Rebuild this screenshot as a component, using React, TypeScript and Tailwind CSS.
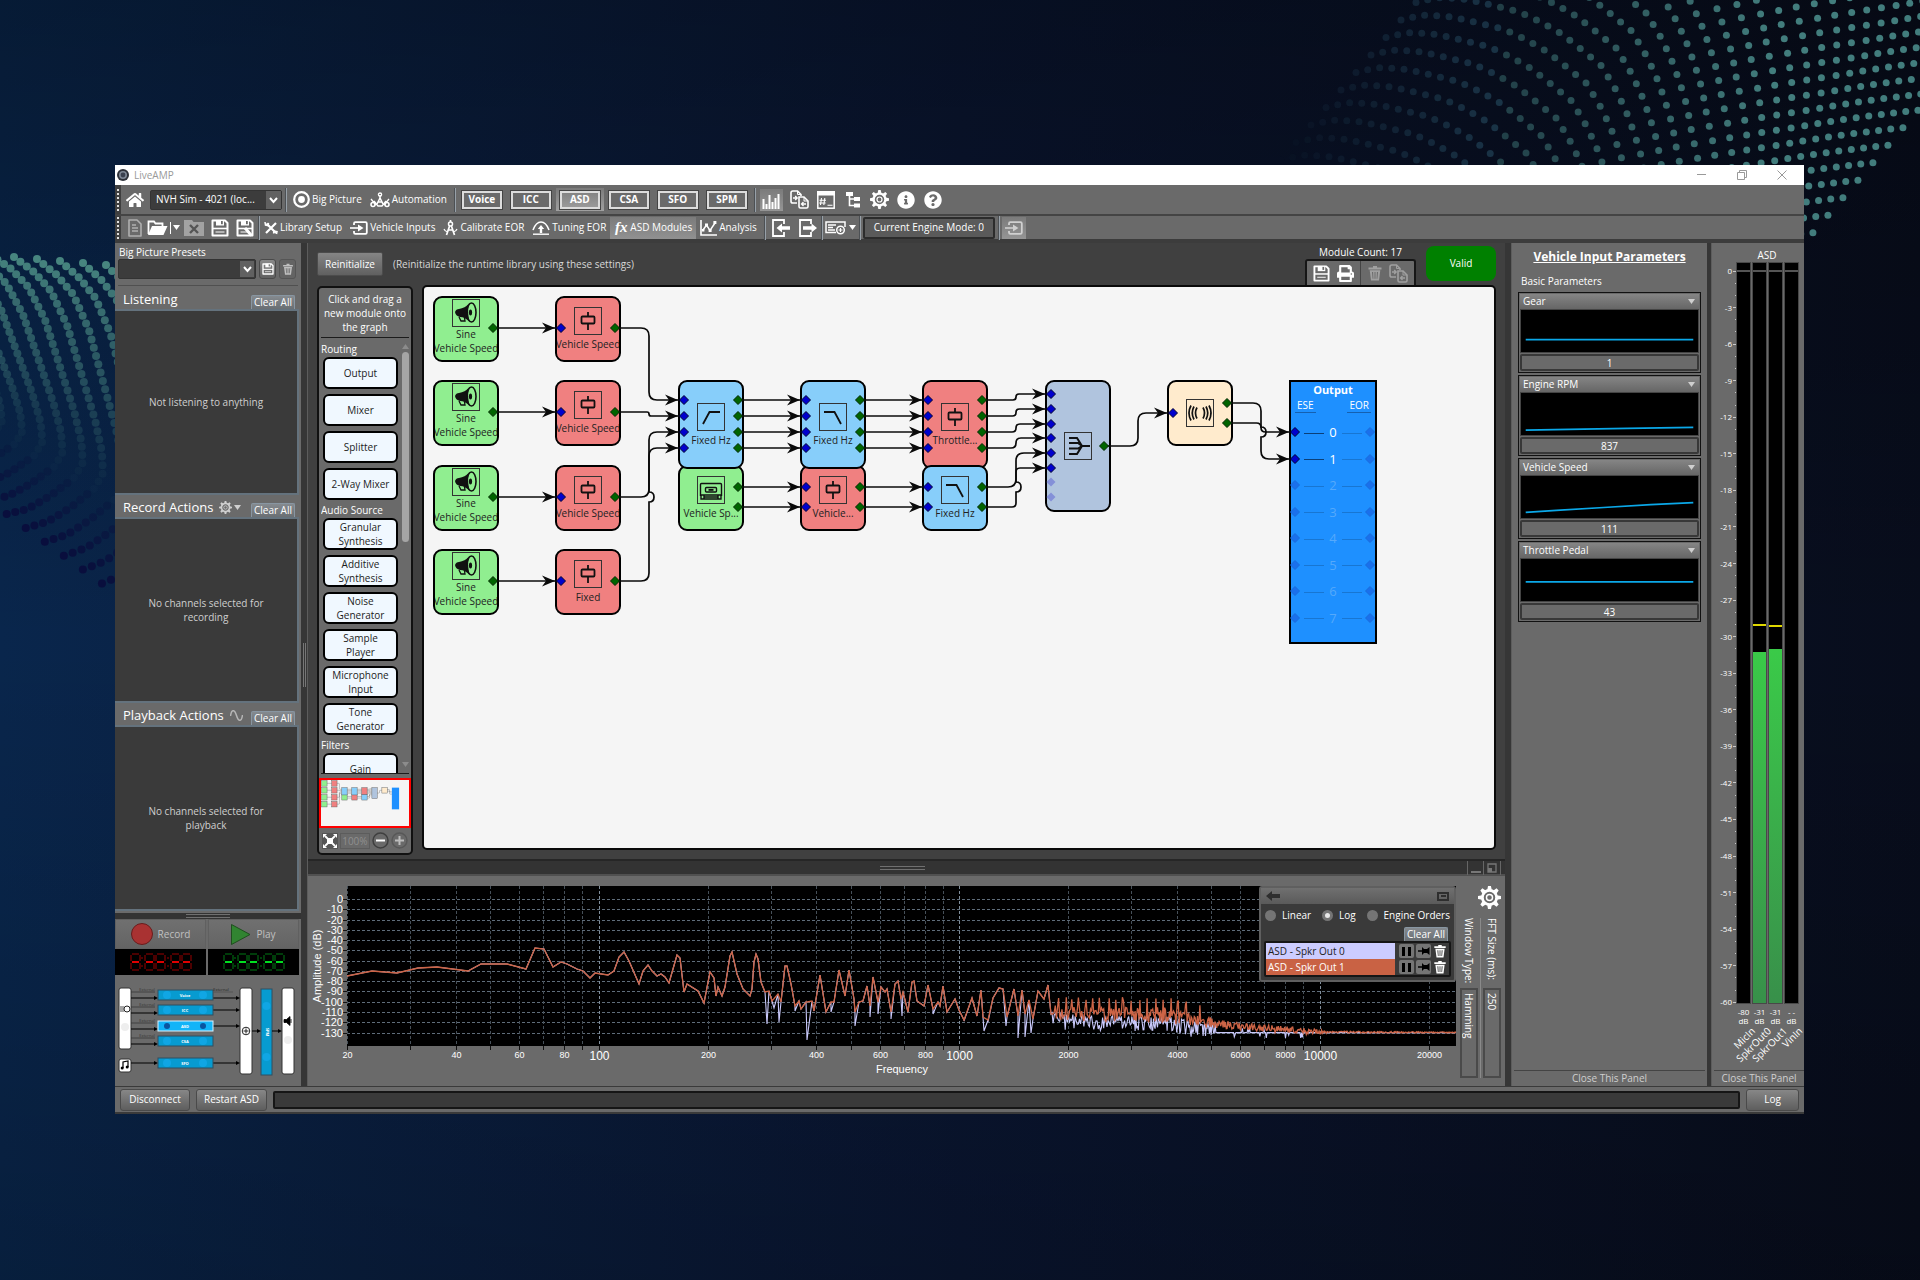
import { ReactNode } from "react";
import { FaHome, FaInfoCircle, FaQuestionCircle, FaPrint } from "react-icons/fa";
import { clsx } from "clsx";

type Pt = [number, number];

/* ---------- backdrop ---------- */

const LEFT_CHAIN: Pt[] = [
  [14, 57], [34, 72], [51, 91], [67, 125], [80, 169], [95, 220], [102, 252],
  [103, 273], [95, 288], [70, 308], [47, 322], [22, 329],
];

const RIGHT_CHAIN: Pt[] = [
  [61, 90], [74, 87], [87, 85], [113, 87], [138, 93], [163, 99], [185, 109], [206, 121], [224, 135], [246, 153],
  [259, 174], [270, 196], [279, 220], [287, 246], [292, 274], [298, 300], [302, 330],
  [301, 378], [297, 410], [292, 445], [286, 484], [278, 530], [268, 580],
];

// walk a polyline and drop a dot every so often
function walk(points: Pt[], stepStart: number, stepEnd: number) {
  const lengths: number[] = [];
  let total = 0;
  for (let i = 1; i < points.length; i++) {
    const d = Math.hypot(points[i][0] - points[i - 1][0], points[i][1] - points[i - 1][1]);
    lengths.push(d);
    total += d;
  }
  const out: { x: number; y: number; t: number }[] = [];
  let s = 0;
  while (s < total) {
    let rest = s;
    let i = 0;
    while (i < lengths.length - 1 && rest > lengths[i]) {
      rest -= lengths[i];
      i++;
    }
    const k = rest / lengths[i];
    out.push({
      x: points[i][0] + (points[i + 1][0] - points[i][0]) * k,
      y: points[i][1] + (points[i + 1][1] - points[i][1]) * k,
      t: s / total,
    });
    s += stepStart + (stepEnd - stepStart) * (s / total);
  }
  return out;
}

function LeftDots() {
  const dots: ReactNode[] = [];
  for (let i = -5; i < 6; i++) {
    walk(LEFT_CHAIN, 8, 9).forEach((d, j) => {
      const x = d.x + i * (23 - 4 * d.t);
      const y = d.y + i * (2 + 12 * d.t);
      if (x < -4 || x > 120) return;
      const dark = d.t > 0.78;
      const opacity = dark ? (d.t - 0.72) * 3.4 : Math.max(0.04, 1 - d.t * 1.3);
      dots.push(<circle key={i + "-" + j} cx={x} cy={y} r={4} fill={dark ? "#0a0c3c" : "#47857f"} opacity={opacity} />);
    });
  }
  return <svg className="absolute left-0 top-[200px] h-[420px] w-[120px]" aria-hidden="true">{dots}</svg>;
}

function RightDots() {
  const dots: ReactNode[] = [];
  for (let n = -6; n < 34; n++) {
    walk(RIGHT_CHAIN, 12, 17).forEach((d, j) => {
      const x = d.x + n * 15;
      const y = d.y - n * 17.5;
      if (y < -4 || y > 260 || x > 645) return;
      // the field is cut off along a slanted edge
      if (x > 622 - (y - 139) * 0.84) return;
      const opacity = Math.min(1, Math.max(0, (x + 5) / 500));
      if (opacity === 0) return;
      dots.push(<circle key={n + "-" + j} cx={x} cy={y} r={3.5} fill={x < 220 ? "#32647c" : "#427d7d"} opacity={opacity} />);
    });
  }
  return <svg className="absolute right-0 top-0 h-[260px] w-[640px]" aria-hidden="true">{dots}</svg>;
}

/* ---------- icons ---------- */

function Svg({ size = 20, w, className, children }: { size?: number; w?: number; className?: string; children: ReactNode }) {
  const width = w ?? size;
  return (
    <svg width={width} height={size} viewBox={`0 0 ${width} ${size}`} fill="none" stroke="currentColor" strokeWidth={2} className={clsx("shrink-0", className)} aria-hidden="true">
      {children}
    </svg>
  );
}

function GearIcon({ size = 18 }: { size?: number }) {
  return (
    <svg width={size} height={size} viewBox="-11 -11 22 22" fill="none" stroke="currentColor" className="shrink-0" aria-hidden="true">
      <circle r="6.8" strokeWidth="2.6" />
      <circle r="2.9" strokeWidth="1.4" />
      {[0, 45, 90, 135, 180, 225, 270, 315].map((a) => (
        <path key={a} d="M-2.2 -7 L-1.4 -11 H1.4 L2.2 -7 Z" fill="currentColor" stroke="none" transform={`rotate(${a})`} />
      ))}
    </svg>
  );
}

function SaveIcon({ size = 18, edit }: { size?: number; edit?: boolean }) {
  return (
    <svg width={size} height={size} viewBox="0 0 18 18" fill="none" stroke="currentColor" className="shrink-0" aria-hidden="true">
      <path d="M1.5 1.5 H14 L16.5 4 V16.5 H1.5 Z" strokeWidth="2" strokeLinejoin="round" />
      <path d="M5 1 V6.5 H13 V1 Z" fill="currentColor" stroke="none" />
      <rect x="10" y="2" width="1.8" height="3.2" fill="#6a6a6a" stroke="none" />
      <path d="M1.5 9.5 H16.5" strokeWidth="1.6" />
      <path d="M4.5 13 H13.5" strokeWidth="1" />
      {edit && <path d="M9 9 L15.5 16.5" strokeWidth="3" />}
    </svg>
  );
}

function TrashIcon({ size = 16 }: { size?: number }) {
  return (
    <svg width={size} height={size} viewBox="0 0 16 16" fill="currentColor" className="shrink-0" aria-hidden="true">
      <path d="M1.5 2.5 H6 V1 H10 V2.5 H14.5 V4.5 H1.5 Z" />
      <path fillRule="evenodd" d="M2.7 5.3 H13.3 L12 15.5 H4 Z M5 7 L5.6 13.8 H6.4 L6.1 7 Z M7.5 7 V13.8 H8.5 V7 Z M9.9 7 L9.6 13.8 H10.4 L11 7 Z" />
    </svg>
  );
}

function PlugIcon() {
  return (
    <Svg size={14} w={18}>
      <path d="M4 4 V2.5 Q4 1.2 5.3 1.2 H15.5 Q16.8 1.2 16.8 2.5 V11.5 Q16.8 12.8 15.5 12.8 H5.3 Q4 12.8 4 11.5 V10" strokeWidth="1.8" />
      <path d="M0 7 H9" strokeWidth="1.6" />
      <path d="M8 3.6 L13.5 7 L8 10.4 Z" fill="currentColor" stroke="none" />
    </Svg>
  );
}

function CopyDocs() {
  return (
    <Svg size={19} w={19}>
      <path d="M7 13 H2.8 Q1 13 1 11.2 V2.8 Q1 1 2.8 1 H7.5 L11 4.5 V6" strokeWidth="1.6" />
      <path d="M9 7 H14 L18 11 V16.5 Q18 18 16.5 18 H10.5 Q9 18 9 16.5 Z" strokeWidth="1.6" />
      <path d="M7.500 1 V4.500 H11 M14 7 V11 H18" strokeWidth="1" />
      <path d="M3 8 H7 M5.200 6 L7.200 8 L5.200 10 M11.500 14 H16 M13.500 12 L11.500 14 L13.500 16" strokeWidth="1.3" />
    </Svg>
  );
}

function Caret() {
  return (
    <svg width="7" height="5" viewBox="0 0 7 5" fill="currentColor" aria-hidden="true" className="shrink-0">
      <path d="M0 0 H7 L3.5 5 Z" />
    </svg>
  );
}

function Chevron() {
  return (
    <Svg size={8} w={9}>
      <path d="M1 2 L4.5 6 L8 2" strokeWidth="2" />
    </Svg>
  );
}

/* ---------- toolbars ---------- */

function Grip() {
  return (
    <div className="flex w-[6px] shrink-0 flex-col items-center justify-center gap-[2px] self-stretch bg-[#3f3f3f]">
      {[0, 1, 2, 3, 4, 5].map((i) => (
        <span key={i} className="h-[2px] w-[2px] bg-[#e0e0e0]" />
      ))}
    </div>
  );
}

function Sep() {
  return <span className="ml-[3px] mr-[2px] h-6 w-[2px] shrink-0 border-l border-[#4c5054] bg-[#97a0a8]" />;
}

function ToolButton({ icon, label, active }: { icon: ReactNode; label: string; active?: boolean }) {
  return (
    <button
      className={clsx(
        "flex h-[22px] shrink-0 items-center gap-[2px] whitespace-nowrap px-[4px] text-[10px] font-medium",
        active && "bg-linear-to-b from-[#7b7b7b] to-[#919191]"
      )}
    >
      {icon}
      {label}
    </button>
  );
}

function IconButton({ label, children, active, className }: { label: string; children: ReactNode; active?: boolean; className?: string }) {
  return (
    <button
      aria-label={label}
      className={clsx("flex h-[22px] shrink-0 items-center justify-center", active && "bg-linear-to-b from-[#7b7b7b] to-[#959595]", className ?? "w-[27px]")}
    >
      {children}
    </button>
  );
}

const MODES = ["Voice", "ICC", "ASD", "CSA", "SFO", "SPM"];

function TopToolbar() {
  return (
    <div className="flex h-[31px] shrink-0 items-center border-b-2 border-[#444] bg-[#6a6a6a]">
      <Grip />
      <IconButton label="Home" className="ml-[2px] w-[24px]">
        <FaHome size={18} />
      </IconButton>
      <div className="relative ml-[3px] flex h-[20px] w-[132px] shrink-0 items-center rounded-[2px] border border-[#333] bg-[#3c3c3c]">
        <select aria-label="Project" className="w-full appearance-none truncate bg-transparent pl-[5px] pr-[20px] text-[10px] text-white">
          <option>NVH Sim - 4021 (loc...</option>
        </select>
        <span className="pointer-events-none absolute right-0 top-0 flex h-[18px] w-[15px] items-center justify-center bg-[#616161]">
          <Chevron />
        </span>
      </div>
      <Sep />
      <ToolButton
        icon={
          <Svg size={17}>
            <circle cx="8.5" cy="8.5" r="7.3" strokeWidth="2.2" />
            <circle cx="8.5" cy="8.5" r="3.4" fill="currentColor" stroke="none" />
          </Svg>
        }
        label="Big Picture"
      />
      <ToolButton
        icon={
          <Svg size={16} w={20}>
            <path d="M10 6 V3 M10 6 L7 12 M10 6 L13 12 M8.4 10 H11.6" strokeWidth="1.6" />
            <circle cx="10" cy="2.6" r="1.6" strokeWidth="1.3" />
            <circle cx="3" cy="12.5" r="2" strokeWidth="1.6" />
            <circle cx="17" cy="12.5" r="2" strokeWidth="1.6" />
            <path d="M1 7 L6 13 M19 7 L14 13 M4 9 L8 14 H12 L16 9" strokeWidth="1.3" />
          </Svg>
        }
        label="Automation"
      />
      <Sep />
      <div className="flex gap-px">
        {MODES.map((m) => (
          <button
            key={m}
            className={clsx("flex h-[23px] w-[48px] items-center justify-center", m === "ASD" && "bg-linear-to-b from-[#7b7b7b] to-[#a0a0a0]")}
          >
            <span className="flex h-[18px] w-[40px] items-center justify-center border-2 border-[#dcdcdc] text-[10px] font-bold outline outline-[#444]">{m}</span>
          </button>
        ))}
      </div>
      <Sep />
      <IconButton label="Meters" active className="ml-[2px] mr-[3px] w-[23px]">
        <Svg size={18} w={18}>
          <path d="M1.5 18 V8 M4.5 18 V13 M7.5 18 V4 M10.5 18 V11 M13.5 18 V7 M16.5 18 V3" strokeWidth="2" />
        </Svg>
      </IconButton>
      <IconButton label="Copy">
        <CopyDocs />
      </IconButton>
      <IconButton label="Console">
        <Svg size={18} w={18}>
          <rect x="0.8" y="0.8" width="16.4" height="16.4" strokeWidth="1.5" />
          <rect x="0" y="0" width="18" height="4.5" fill="currentColor" stroke="none" />
          <path d="M4.5 7 L3.5 14 M7.8 7 L6.8 14 M2.5 9.2 H9 M2.2 12 H8.6 M10.5 14.3 H15.5" strokeWidth="1.1" />
        </Svg>
      </IconButton>
      <IconButton label="Tree" className="w-[26px]">
        <Svg size={18} w={16}>
          <path d="M4.5 3 V14.5 H10 M4.5 8 H10" strokeWidth="1.6" />
          <path d="M1 1 H8 V5 H1 Z M9 6 H15 V10 H9 Z M9 12.5 H15 V16.5 H9 Z" fill="currentColor" stroke="none" />
        </Svg>
      </IconButton>
      <IconButton label="Settings">
        <GearIcon size={19} />
      </IconButton>
      <IconButton label="Info">
        <FaInfoCircle size={18} />
      </IconButton>
      <IconButton label="Help">
        <FaQuestionCircle size={18} />
      </IconButton>
    </div>
  );
}

function SecondToolbar() {
  return (
    <div className="flex h-[27px] shrink-0 items-center border-b-4 border-[#3c3c3c] bg-[#6a6a6a]">
      <Grip />
      <IconButton label="New" className="ml-[4px] w-[20px] text-[#b0b0b0]">
        <Svg size={18} w={14}>
          <path d="M1 1 H9 L13 5 V17 H1 Z" strokeWidth="1.6" strokeLinejoin="round" />
          <path d="M4 6 H8 M4 9 H10 M4 12 H10" strokeWidth="1.3" />
        </Svg>
      </IconButton>
      <IconButton label="Open" className="w-[36px] gap-[2px]">
        <Svg size={17} w={21}>
          <path d="M1.5 15 V2.5 H7 L8.5 4.5 H15.5 V7" strokeWidth="1.8" />
          <path d="M1 16 L5 7 H20.5 L16.5 16 Z" fill="currentColor" stroke="none" />
        </Svg>
        <span className="h-[12px] w-px bg-white" />
        <Caret />
      </IconButton>
      <IconButton label="Close" className="w-[26px] text-[#a2a2a2]">
        <Svg size={17} w={20}>
          <path d="M0 1 H8 L9.5 3 H20 V17 H0 Z" fill="currentColor" stroke="none" />
          <path d="M6 6 L14 14 M14 6 L6 14" stroke="#555" strokeWidth="2.4" />
        </Svg>
      </IconButton>
      <IconButton label="Save" className="w-[25px]">
        <SaveIcon />
      </IconButton>
      <IconButton label="Save as" className="w-[25px]">
        <SaveIcon edit />
      </IconButton>
      <span className="ml-[1px] h-6 w-[2px] shrink-0 border-l border-[#4c5054] bg-[#97a0a8]" />
      <ToolButton
        icon={
          <Svg size={14}>
            <path d="M2 12 L12 2 M2.500 2.500 L12 12" strokeWidth="2.200" />
            <path d="M1 1 L1.500 4 L4 4.500 L4.500 1.800 M9.500 12.500 L10 10 L13 10.500 L12.500 13" strokeWidth="1.500" />
          </Svg>
        }
        label="Library Setup"
      />
      <ToolButton icon={<PlugIcon />} label="Vehicle Inputs" />
      <ToolButton
        icon={
          <Svg size={16} w={15}>
            <circle cx="7.5" cy="4" r="2" strokeWidth="1.5" />
            <path d="M7.5 2 V0 M6.6 6 L3.5 15 M8.4 6 L11.5 15 M5 10 H10" strokeWidth="1.7" />
            <path d="M1 9 Q2 11.5 4.5 11.8 M14 9 Q13 11.5 10.5 11.8" strokeWidth="1.2" />
          </Svg>
        }
        label="Calibrate EOR"
      />
      <ToolButton
        icon={
          <Svg size={16} w={18}>
            <path d="M1 10 Q4 2 9 2 Q14 2 17 10" strokeWidth="1.6" />
            <path d="M9 5 L5.8 9 H7.8 V13 H10.2 V9 H12.2 Z" fill="currentColor" stroke="none" />
            <path d="M1 14.2 H17" strokeWidth="1.4" />
          </Svg>
        }
        label="Tuning EOR"
      />
      <ToolButton active icon={<span className="w-[14px] text-center font-['Liberation_Serif',serif] text-[15px] font-bold italic leading-none">fx</span>} label="ASD Modules" />
      <ToolButton
        icon={
          <Svg size={16} w={17}>
            <path d="M1 0 V15 H17" strokeWidth="1.6" />
            <path d="M3 10 L6.5 5 L10 10.5 L15 3" strokeWidth="1.5" />
            <path d="M5 3.6 h3 v3 h-3 Z M8.6 9 h3 v3 h-3 Z M13.4 1 h3 v3 h-3 Z M2 9 h2.4 v2.4 h-2.4 Z" fill="currentColor" stroke="none" />
          </Svg>
        }
        label="Analysis"
      />
      <Sep />
      <IconButton label="Import" className="ml-[3px] w-[20px]">
        <Svg size={18} w={18}>
          <path d="M12 5 V1 H1 V17 H12 V13" strokeWidth="1.8" />
          <path d="M4.5 9 L10 4.5 V7.3 H18 V10.7 H10 V13.5 Z" fill="currentColor" stroke="none" />
        </Svg>
      </IconButton>
      <IconButton label="Export" className="ml-[7px] w-[20px]">
        <Svg size={18} w={18}>
          <path d="M12 5 V1 H1 V17 H12 V13" strokeWidth="1.8" />
          <path d="M18 9 L12.5 4.5 V7.3 H4 V10.7 H12.5 V13.5 Z" fill="currentColor" stroke="none" />
        </Svg>
      </IconButton>
      <Sep />
      <IconButton label="Add preset" className="w-[31px] gap-[3px]">
        <Svg size={14} w={21}>
          <path d="M20 6 V1 H1 V11.5 H11" strokeWidth="1.5" />
          <path d="M3 4 H11 M3 6.5 H8 M3 9 H10" strokeWidth="1.4" />
          <circle cx="15.5" cy="9" r="3.8" strokeWidth="1.5" />
          <path d="M15.5 7 V11 M13.5 9 H17.5" strokeWidth="1.2" />
        </Svg>
        <Caret />
      </IconButton>
      <Sep />
      <span className="flex h-[22px] shrink-0 items-center whitespace-nowrap rounded-[2px] border-2 border-[#2c2c2c] bg-[#5a5a5a] px-[9px] text-[10px]">Current Engine Mode: 0</span>
      <Sep />
      <IconButton label="Engine input" active className="w-[24px] text-[#d0d0d0]">
        <PlugIcon />
      </IconButton>
    </div>
  );
}

/* ---------- left column ---------- */

function ClearAll() {
  return (
    <button className="h-[14px] whitespace-nowrap rounded-t-[2px] border border-b-0 border-[#8896a2] bg-linear-to-b from-[#858a8f] to-[#6a6f73] px-[2px] text-[10px] leading-[13px]">
      Clear All
    </button>
  );
}

function ActionSection({ title, icon, children }: { title: string; icon?: ReactNode; children: ReactNode }) {
  return (
    <section className="flex min-h-0 flex-1 flex-col pr-[2px]">
      <div className="flex h-[22px] shrink-0 items-end pl-[8px] pr-[4px]">
        <h2 className="flex flex-1 items-center gap-[6px] text-[13px] leading-[20px]">
          {title}
          {icon}
        </h2>
        <ClearAll />
      </div>
      <div className="flex flex-1 items-center justify-center border-2 border-l-0 border-[#64727d] bg-[#3a3a3a] px-6 text-center text-[10px] leading-[14px] text-[#cfcfcf]">
        {children}
      </div>
    </section>
  );
}

function Lcd({ lit, ghost }: { lit: string; ghost: string }) {
  return (
    <div className="flex h-[26px] flex-1 items-center bg-black">
      <svg width="91" height="26" aria-hidden="true">
        {[16, 30, 41, 56, 67].map((x) => (
          <g key={x} fill="none" strokeWidth="2">
            <path d={`M${x + 1} 5 H${x + 8} M${x} 6 V12 M${x + 9} 6 V12 M${x} 14 V20 M${x + 9} 14 V20 M${x + 1} 21 H${x + 8}`} stroke={ghost} />
            <path d={`M${x + 1} 13 H${x + 8}`} stroke={lit} />
          </g>
        ))}
        {[27, 53].map((x) => (
          <path key={x} d={`M${x} 8 v2 M${x} 16 v2`} stroke={ghost} strokeWidth="2" />
        ))}
      </svg>
    </div>
  );
}

const ROUTES = [
  { name: "Voice", y: 15 },
  { name: "ICC", y: 30 },
  { name: "ASD", y: 46 },
  { name: "CSA", y: 61 },
  { name: "SFO", y: 83 },
];

function RoutingOverview() {
  return (
    <svg className="w-full" height="111" viewBox="0 0 186 111" preserveAspectRatio="xMinYMin meet" fontFamily="Open Sans, sans-serif">
      <g fill="#fff" stroke="#333" strokeWidth="1">
        <rect x="4" y="13" width="12" height="61" rx="2" />
        <rect x="4" y="84" width="12" height="13" rx="2" />
        <rect x="125" y="13" width="12" height="86" rx="2" />
        <rect x="167" y="13" width="12" height="86" rx="2" />
      </g>
      <rect x="146" y="14" width="11" height="86" fill="#079bd0" stroke="#2e4f60" />
      <g fill="#10a6e4">
        <circle cx="151.500" cy="31" r="4" />
        <circle cx="151.500" cy="82" r="4" />
      </g>
      <text x="151" y="57" fontSize="4" fontWeight="bold" fill="#fff" textAnchor="middle" transform="rotate(90 151 57)">SPM</text>
      {ROUTES.map((r) => {
        const on = r.name === "ASD";
        return (
          <g key={r.name}>
            {r.name !== "SFO" && (
              <g stroke="#333" strokeWidth="1" opacity="0.75">
                <path d={`M16 ${r.y + 2} H40`} />
                <text x="32" y={r.y + 1} fontSize="4" fill="#222" stroke="none" textAnchor="middle">External</text>
              </g>
            )}
            <path d={`M16 ${r.y + (r.name === "SFO" ? 5 : 8)} H41`} stroke="#000" />
            <path d={`M39 ${r.y + (r.name === "SFO" ? 3 : 6)} l4 2 l-4 2 Z`} />
            {r.name !== "CSA" && (
              <>
                <path d={`M98 ${r.y + (r.name === "Voice" ? 8 : 5)} H123`} stroke="#000" />
                <path d={`M121 ${r.y + (r.name === "Voice" ? 6 : 3)} l4 2 l-4 2 Z`} />
              </>
            )}
            <rect x="43" y={r.y} width="55" height="10" fill={on ? "#12b4f8" : "#079bd0"} stroke={on ? "#d8f2ff" : "#2e4f60"} />
            <circle cx="52" cy={r.y + 5} r={on ? 3 : 4} fill={on ? "#0a55a0" : "#10a6e4"} />
            <circle cx="88" cy={r.y + 5} r={on ? 3 : 4} fill={on ? "#0a55a0" : "#10a6e4"} />
            <text x="70" y={r.y + 7} fontSize="4" fontWeight="bold" fill="#fff" textAnchor="middle">{r.name}</text>
          </g>
        );
      })}
      <path d="M98 17 H118" stroke="#555" />
      <text x="106" y="16" fontSize="4" fill="#222" textAnchor="middle">External</text>
      <path d="M137 56 H144 M157 56 H165" stroke="#000" />
      <path d="M142 54 l4 2 l-4 2 Z M163 54 l4 2 l-4 2 Z" />
      <circle cx="131" cy="56" r="3.800" fill="none" stroke="#222" />
      <path d="M131 53.500 v5 M128.500 56 h5" stroke="#222" />
      <circle cx="12" cy="34" r="3" fill="none" stroke="#222" />
      <path d="M6 31 v6 M8 31 v6" stroke="#222" strokeWidth="0.800" />
      <circle cx="10" cy="52" r="4" fill="#eee" />
      <circle cx="173" cy="65" r="4" fill="#eee" />
      <path d="M169 44.500 h2.500 l3.500 -3 v9 l-3.500 -3 h-2.500 Z M176 44 v4" stroke="#000" strokeWidth="0.800" />
      <path d="M8 93 V87 L13 86 V92" fill="none" stroke="#000" strokeWidth="1.200" />
      <circle cx="7.200" cy="93" r="1.500" />
      <circle cx="12.200" cy="92" r="1.500" />
    </svg>
  );
}

function LeftPanel() {
  return (
    <aside className="flex w-[186px] shrink-0 flex-col bg-[#6a6a6a]">
      <div className="mx-[3px] mb-[1px] flex h-[43px] shrink-0 flex-col border-b border-[#505050]">
        <label htmlFor="presets" className="block pl-px pt-[2px] text-[10px] leading-[14px]">
          Big Picture Presets
        </label>
        <div className="flex gap-[3px]">
          <div className="relative h-[20px] flex-1 rounded-[2px] border border-[#333] bg-[#3c3c3c]">
            <select id="presets" className="h-full w-full appearance-none bg-transparent pl-1 text-[10px]" />
            <span className="pointer-events-none absolute right-px top-px flex h-[16px] w-[14px] items-center justify-center bg-[#616161]">
              <Chevron />
            </span>
          </div>
          <button aria-label="Save preset" className="flex h-[20px] w-[17px] items-center justify-center rounded-[3px] border border-[#4a4a4a] bg-linear-to-b from-[#8a8a8a] to-[#606060]">
            <SaveIcon size={12} />
          </button>
          <button aria-label="Delete preset" className="mr-[2px] flex h-[20px] w-[17px] items-center justify-center rounded-[3px] border border-[#555] bg-[#646464] text-[#c0c0c0]">
            <TrashIcon size={12} />
          </button>
        </div>
      </div>
      <ActionSection title="Listening">Not listening to anything</ActionSection>
      <ActionSection
        title="Record Actions"
        icon={
          <span className="flex items-center gap-[2px] text-[#cfcfcf]">
            <GearIcon size={13} />
            <Caret />
          </span>
        }
      >
        No channels selected for recording
      </ActionSection>
      <ActionSection
        title="Playback Actions"
        icon={
          <Svg size={11} w={13} className="text-[#b5b5b5]">
            <path d="M0.500 6 C1.500 -1 4.500 -1 6.500 5.500 S11.500 12 12.500 5" strokeWidth="1.500" />
          </Svg>
        }
      >
        No channels selected for playback
      </ActionSection>
      <div className="mt-[2px] flex h-[6px] shrink-0 items-center justify-center bg-[#333]">
        <span className="h-[4px] w-[44px] border-y border-[#707070]" />
      </div>
      <div className="flex h-[30px] shrink-0 gap-[2px] pr-[2px] text-[10px] text-[#c0c0c0]">
        <button className="flex flex-1 items-center justify-center gap-[5px] border border-[#606060] bg-linear-to-b from-[#707070] to-[#646464]">
          <span className="h-[22px] w-[22px] rounded-full border border-[#6a1c1c] bg-[#a93232]" />
          Record
        </button>
        <button className="flex flex-1 items-center justify-center gap-[5px] border border-[#606060] bg-linear-to-b from-[#707070] to-[#646464]">
          <Svg size={21} w={20}>
            <path d="M0.500 0.500 L19 10.500 L0.500 20.500 Z" fill="#318431" stroke="#1f4f1f" strokeWidth="1" />
          </Svg>
          Play
        </button>
      </div>
      <div className="flex shrink-0 gap-[2px] pr-[2px]">
        <Lcd lit="#e00000" ghost="#4c0000" />
        <Lcd lit="#00e020" ghost="#003c0a" />
      </div>
      <div className="h-[111px] shrink-0">
        <RoutingOverview />
      </div>
    </aside>
  );
}

/* ---------- module palette ---------- */

function ModuleButton({ label }: { label: string }) {
  return (
    <button className="flex h-[32px] w-[75px] shrink-0 items-center justify-center rounded-[6px] border-2 border-black bg-[#f0f8ff] px-[3px] text-center text-[10px] leading-[14px] text-[#1c1c1c]">
      {label}
    </button>
  );
}

const PALETTE = [
  { group: "Routing", items: ["Output", "Mixer", "Splitter", "2-Way Mixer"] },
  { group: "Audio Source", items: ["Granular Synthesis", "Additive Synthesis", "Noise Generator", "Sample Player", "Microphone Input", "Tone Generator"] },
  { group: "Filters", items: ["Gain"] },
];

function Palette() {
  return (
    <div className="mb-1 mt-px flex w-[96px] shrink-0 flex-col rounded-[5px] border-2 border-[#111] bg-[#6a6a6a]">
      <p className="px-1 pb-[3px] pt-[4px] text-center text-[10px] font-medium leading-[14px]">Click and drag a new module onto the graph</p>
      <div className="mx-[2px] flex min-h-0 flex-1 basis-0 border-y border-[#1c1c1c]">
        <div className="w-[80px] overflow-hidden pt-[4px]">
          {PALETTE.map((g) => (
            <div key={g.group}>
              <h3 className="text-[10px] leading-[15px]">{g.group}</h3>
              <div className="mb-[3px] ml-[2px] flex flex-col gap-[5px]">
                {g.items.map((m) => (
                  <ModuleButton key={m} label={m} />
                ))}
              </div>
            </div>
          ))}
        </div>
        <div className="flex flex-1 flex-col items-center justify-between py-[6px] text-[#8c8c8c]">
          <span className="rotate-180"><Caret /></span>
          <span className="mt-[3px] h-[190px] w-[7px] rounded-full bg-[#a5a5a5]" />
          <span className="flex-1" />
          <Caret />
        </div>
      </div>
      <svg className="mt-[4px] block h-[50px] w-full shrink-0 border-[2px] border-[#ff0000] bg-[#f5f5f5]" viewBox="0 0 1074 560" preserveAspectRatio="none" aria-hidden="true">
        {WIRES.map((d) => (
          <path key={d} d={d} fill="none" stroke="#555" strokeWidth="4" />
        ))}
        {NODES.map((n, i) => (
          <rect key={i} x={n.x} y={n.y} width="65" height={n.h} fill={NODE_FILL[n.kind]} stroke="#555" strokeWidth="5" />
        ))}
        <rect x="865" y="93" width="88" height="264" fill="#1e90ff" />
      </svg>
      <div className="flex h-[25px] items-center justify-between px-[3px]">
        <button aria-label="Fit" className="bg-[#555]">
          <Svg size={16}>
            <path d="M3 3 L13 13 M13 3 L3 13" strokeWidth="1.800" />
            <path d="M1 1 h4 l-4 4 Z M15 1 v4 l-4 -4 Z M1 15 v-4 l4 4 Z M15 15 h-4 l4 -4 Z M5 5 h6 v6 h-6 Z" fill="currentColor" stroke="none" />
          </Svg>
        </button>
        <span className="border border-[#5c5c5c] px-px text-[10px] leading-[14px] text-[#8f8f8f]">100%</span>
        <button aria-label="Zoom out">
          <Svg size={17}>
            <circle cx="8.500" cy="8.500" r="7.500" stroke="#3f3f3f" strokeWidth="1.500" />
            <path d="M4 8.500 H13" />
          </Svg>
        </button>
        <button aria-label="Zoom in" className="text-[#bdbdbd]">
          <Svg size={17}>
            <circle cx="8.500" cy="8.500" r="7.500" stroke="#585858" strokeWidth="1.500" />
            <path d="M4 8.500 H13 M8.500 4 V13" />
          </Svg>
        </button>
      </div>
    </div>
  );
}

/* ---------- graph ---------- */

type Glyph = "horn" | "gain" | "high" | "low" | "tape" | "mix" | "pan";

const NODE_FILL = { source: "#90ee90", gain: "#f08080", filter: "#87cefa", mixer: "#b0c4de", pan: "#ffebcd" };
const NODE_CLASS = {
  source: "bg-[#90ee90]",
  gain: "bg-[#f08080]",
  filter: "bg-[#87cefa]",
  mixer: "bg-[#b0c4de]",
  pan: "bg-[#ffebcd]",
};

interface GraphNode {
  x: number;
  y: number;
  h: number;
  kind: keyof typeof NODE_FILL;
  glyph: Glyph;
  lines: string[];
  pad: number;
}

const ROWS = [9, 93, 178, 262];

const NODES: GraphNode[] = [
  ...ROWS.map((y): GraphNode => ({ x: 9, y, h: 66, kind: "source", glyph: "horn", lines: ["Sine", "Vehicle Speed"], pad: 1 })),
  ...ROWS.map((y, i): GraphNode => ({ x: 131, y, h: 66, kind: "gain", glyph: "gain", lines: [i === 3 ? "Fixed" : "Vehicle Speed"], pad: 9 })),
  { x: 254, y: 178, h: 66, kind: "source", glyph: "tape", lines: ["Vehicle Sp..."], pad: 9 },
  { x: 376, y: 178, h: 66, kind: "gain", glyph: "gain", lines: ["Vehicle..."], pad: 9 },
  { x: 254, y: 93, h: 89, kind: "filter", glyph: "high", lines: ["Fixed Hz"], pad: 21 },
  { x: 376, y: 93, h: 89, kind: "filter", glyph: "low", lines: ["Fixed Hz"], pad: 21 },
  { x: 498, y: 93, h: 89, kind: "gain", glyph: "gain", lines: ["Throttle..."], pad: 21 },
  { x: 498, y: 178, h: 66, kind: "filter", glyph: "low", lines: ["Fixed Hz"], pad: 9 },
  { x: 621, y: 93, h: 132, kind: "mixer", glyph: "mix", lines: [], pad: 50 },
  { x: 743, y: 93, h: 66, kind: "pan", glyph: "pan", lines: [], pad: 17 },
];

// orthogonal connector with rounded elbows
function elbow(x1: number, y1: number, xm: number, y2: number, x2: number) {
  if (y1 === y2) return `M${x1} ${y1} H${x2}`;
  const r = Math.min(8, Math.abs(y2 - y1) / 2);
  const s = y2 > y1 ? r : -r;
  return `M${x1} ${y1} H${xm - r} Q${xm} ${y1} ${xm} ${y1 + s} V${y2 - s} Q${xm} ${y2} ${xm + r} ${y2} H${x2}`;
}

const FOUR = [113, 129, 145, 161];
const TWO = [200, 220];
const MIX_IN = [107, 122, 137, 151, 166, 181, 195, 210];
const OUT_Y = [145, 172, 198, 225, 251, 278, 304, 331];

const WIRES = [
  ...ROWS.map((y) => elbow(69, y + 32, 0, y + 32, 133)),
  elbow(191, 41, 225, 113, 255),
  elbow(191, 125, 225, 129, 255),
  elbow(191, 210, 225, 145, 255),
  "M191 294 H217 Q225 294 225 286 V215 Q230 215 230 210 Q230 205 225 205 V169 Q225 161 233 161 H255",
  ...FOUR.map((y) => elbow(314, y, 0, y, 378)),
  ...FOUR.map((y) => elbow(436, y, 0, y, 500)),
  ...TWO.map((y) => elbow(314, y, 0, y, 378)),
  ...TWO.map((y) => elbow(436, y, 0, y, 500)),
  ...FOUR.map((y, i) => elbow(558, y, 592, MIX_IN[i], 622)),
  elbow(558, 200, 592, 166, 622),
  "M558 220 H588 Q592 220 592 216 V205 Q597 205 597 200 Q597 195 592 195 V185 Q592 181 596 181 H622",
  elbow(680, 159, 714, 126, 744),
  "M803 116 H829 Q837 116 837 124 V140 Q842 140 842 145 Q842 150 837 150 V164 Q837 172 845 172 H866",
  elbow(803, 136, 837, 145, 866),
];

const IN_PORTS: Pt[] = [
  ...ROWS.map((y): Pt => [137, y + 32]),
  ...[260, 382, 504].flatMap((x) => FOUR.map((y): Pt => [x, y])),
  ...[382, 504].flatMap((x) => TWO.map((y): Pt => [x, y])),
  ...MIX_IN.slice(0, 6).map((y): Pt => [627, y]),
  [749, 126],
  [871, OUT_Y[0]],
  [871, OUT_Y[1]],
];

const OUT_PORTS: Pt[] = [
  ...ROWS.map((y): Pt => [69, y + 32]),
  ...ROWS.map((y): Pt => [191, y + 32]),
  ...[314, 436, 558].flatMap((x) => [...FOUR, ...TWO].map((y): Pt => [x, y])),
  [680, 159],
  [803, 116],
  [803, 136],
];

function diamond([x, y]: Pt) {
  return `M${x - 4.5} ${y} L${x} ${y - 4.5} L${x + 4.5} ${y} L${x} ${y + 4.5} Z`;
}

function NodeGlyph({ glyph }: { glyph: Glyph }) {
  return (
    <svg width="28" height="28" viewBox="0 0 28 28" fill="none" stroke="#111" strokeWidth="1.8" className="shrink-0" aria-hidden="true">
      <rect x="0.5" y="0.5" width="27" height="27" stroke="#333" strokeWidth="1" />
      {glyph === "horn" && (
        <>
          <path d="M3 13 Q4 10 7 10 Q13 9 17 4.500 Q15 13 17.500 23 Q13 18 8 18 Q3.500 17 3 13 Z" fill="#111" stroke="none" />
          <path d="M7 18 L9 22 H13 L12.500 19" strokeWidth="1.300" />
          <ellipse cx="19.500" cy="13.500" rx="4.500" ry="9.500" strokeWidth="1.600" />
          <ellipse cx="18.500" cy="13.500" rx="1.600" ry="3" fill="#111" stroke="none" />
        </>
      )}
      {glyph === "gain" && (
        <>
          <path d="M14 5 V9.500 M14 16.500 V23" />
          <rect x="7.500" y="9.500" width="13" height="7" rx="1" />
        </>
      )}
      {glyph === "high" && <path d="M6 21 L12.500 9 H23" />}
      {glyph === "low" && <path d="M5 9 H15.500 L22 21" />}
      {glyph === "tape" && (
        <>
          <path d="M3.500 20 V8.500 Q3.500 7.500 4.500 7.500 H23.500 Q24.500 7.500 24.500 8.500 V20" strokeWidth="1.400" />
          <rect x="8.500" y="11.500" width="11" height="4.500" rx="1" strokeWidth="1.400" />
          <rect x="11.500" y="13" width="5" height="1.800" fill="#111" stroke="none" />
          <path d="M4 19 H24 V23 H4 Z M7 19 V23 M21 19 V23" strokeWidth="1.400" />
          <path d="M7 21 H21" strokeWidth="1.600" />
        </>
      )}
      {glyph === "mix" && (
        <path d="M5 6 H13 L18 14 H26 M5 11 H14 L18 14 M5 16.500 H14 L18 14 M5 22 H13 L18 14" strokeWidth="2" />
      )}
      {glyph === "pan" && (
        <path
          d="M11 8.500 Q8 14 11 19.500 M8 7.500 Q4.500 14 8 20.500 M5 6.500 Q1 14 5 21.500 M17 8.500 Q20 14 17 19.500 M20 7.500 Q23.500 14 20 20.500 M23 6.500 Q27 14 23 21.500"
          strokeWidth="1.700"
        />
      )}
    </svg>
  );
}

function Graph() {
  return (
    <div className="relative mb-[9px] min-w-0 flex-1 overflow-hidden rounded-[5px] border-2 border-[#0a0a0a] bg-[#f5f5f5] text-black">
      {NODES.map((n, i) => (
        <div
          key={i}
          className={clsx("absolute flex w-[66px] flex-col items-center overflow-hidden rounded-[9px] border-2 border-black", NODE_CLASS[n.kind])}
          style={{ left: n.x, top: n.y, height: n.h, paddingTop: n.pad }}
        >
          <NodeGlyph glyph={n.glyph} />
          <span className={clsx("flex flex-col items-center whitespace-nowrap text-[10px] leading-[14px] text-[#222]", n.glyph !== "horn" && "pt-[2px]")}>
            {n.lines.map((l) => (
              <span key={l}>{l}</span>
            ))}
          </span>
        </div>
      ))}

      <div className="absolute left-[865px] top-[93px] flex h-[264px] w-[88px] flex-col border-2 border-black bg-[#1e90ff] text-white">
        <div className="text-center text-[11px] font-bold leading-[16px]">Output</div>
        <div className="flex justify-between px-[4px] text-[10px] leading-[14px]">
          <span className="border-b border-[#1560b0] px-[2px]">ESE</span>
          <span className="border-b border-[#1560b0] px-[2px]">EOR</span>
        </div>
        <ol className="mt-[7px] flex-1">
          {OUT_Y.map((y, i) => (
            <li key={y} className={clsx("flex h-[26px] items-center justify-between px-[13px] text-[13px]", i > 1 && "text-[#55a9fb]", i % 2 === 1 && "h-[27px]")}>
              <span className={clsx("h-px w-[20px]", i > 1 ? "bg-[#1876d2]" : "bg-[#0b3f78]")} />
              {i}
              <span className="h-px w-[20px] bg-[#1876d2]" />
            </li>
          ))}
        </ol>
      </div>

      <svg className="pointer-events-none absolute inset-0 h-full w-full" aria-hidden="true">
        <g fill="none" stroke="#0a0a0a" strokeWidth="1.7">
          {WIRES.map((d) => (
            <path key={d} d={d} />
          ))}
        </g>
        {IN_PORTS.map(([x, y]) => (
          <path key={x + "," + y} d={`M${x - 6} ${y} L${x - 19} ${y - 5.5} L${x - 15} ${y} L${x - 19} ${y + 5.5} Z`} fill="#0a0a0a" />
        ))}
        <g fill="#0000cd" stroke="#000030">
          {IN_PORTS.map((p) => (
            <path key={p.join()} d={diamond(p)} />
          ))}
        </g>
        <g fill="#006400" stroke="#002800">
          {OUT_PORTS.map((p) => (
            <path key={p.join()} d={diamond(p)} />
          ))}
        </g>
        <g fill="#8490d8">
          <path d={diamond([627, 195])} />
          <path d={diamond([627, 210])} />
        </g>
        <g fill="#1a70ec" stroke="#1a6cdc">
          {OUT_Y.slice(2).map((y) => (
            <path key={y} d={diamond([871, y])} />
          ))}
          {OUT_Y.map((y) => (
            <path key={y} d={diamond([946, y])} />
          ))}
        </g>
      </svg>
    </div>
  );
}

function MainArea() {
  return (
    <div className="flex min-h-0 flex-1 flex-col bg-[#404040] px-[9px]">
      <div className="flex h-[42px] shrink-0 items-end">
        <div className="flex flex-1 items-center gap-[10px] self-center text-[10px]">
          <button className="h-[24px] rounded-[2px] border border-[#4c4c4c] bg-linear-to-b from-[#858585] to-[#606060] px-[7px]">Reinitialize</button>
          <span className="text-[#d8d8d8]">(Reinitialize the runtime library using these settings)</span>
        </div>
        <div className="flex flex-col items-center">
          <span className="text-[10px] leading-[14px]">Module Count: 17</span>
          <div className="flex h-[26px] w-[111px] rounded-t-[3px] border-2 border-b-0 border-[#161616] bg-[#6a6a6a]">
            <div className="flex flex-1 items-center justify-evenly border-r border-[#444]">
              <button aria-label="Save graph"><SaveIcon size={17} /></button>
              <button aria-label="Print graph"><FaPrint size={17} /></button>
            </div>
            <div className="flex flex-1 items-center justify-evenly text-[#a0a0a0]">
              <button aria-label="Delete module"><TrashIcon size={16} /></button>
              <button aria-label="Copy module"><CopyDocs /></button>
            </div>
          </div>
        </div>
        <div className="ml-[10px] mt-[3px] flex h-[35px] w-[70px] items-center justify-center self-start rounded-[8px] bg-[#008000] text-[10px]">Valid</div>
      </div>
      <div className="flex min-h-0 flex-1 gap-[9px]">
        <Palette />
        <Graph />
      </div>
    </div>
  );
}

/* ---------- spectrum ---------- */

const PLOT = { x: 39, y: 10, w: 1109, h: 160 };

const TRACE: Pt[] = [
  [0, 90], [25, 85], [50, 87], [71, 82], [90, 81], [121, 85], [134, 78], [160, 78], [179, 83], [188, 62], [197, 63],
  [206, 81], [214, 76], [220, 78], [230, 83], [236, 85], [243, 92], [248, 87], [261, 89], [267, 85], [272, 71], [277, 66],
  [282, 75], [292, 98], [296, 85], [301, 79], [305, 85], [310, 90], [314, 88], [318, 91], [322, 97], [330, 69], [333, 72],
  [337, 106], [340, 98], [351, 105], [357, 117], [363, 86], [367, 92], [369, 110], [371, 101], [375, 110], [378, 101],
  [383, 70], [385, 66], [390, 88], [396, 103], [403, 110], [405, 103], [407, 76], [409, 68], [411, 73], [414, 96],
  [418, 106], [422, 105], [425, 115], [431, 108], [434, 116], [438, 80], [440, 80], [444, 98], [448, 120], [452, 115],
  [454, 123], [459, 116], [465, 115], [467, 125], [473, 89], [479, 126], [484, 116], [487, 116], [492, 84], [498, 110],
  [502, 84], [507, 113], [508, 126], [512, 116], [516, 115], [520, 100], [523, 120], [526, 91], [531, 116], [534, 101],
  [538, 106], [540, 103], [544, 126], [548, 98], [551, 95], [554, 113], [556, 106], [561, 126], [565, 96], [567, 95],
  [570, 115], [577, 120], [581, 99], [586, 123], [591, 116], [593, 120], [596, 100], [600, 126], [608, 113], [612, 124],
  [617, 134], [625, 112], [630, 130], [634, 104], [636, 131], [641, 134], [646, 112], [652, 102], [656, 103], [660, 131],
  [667, 103], [671, 130], [675, 104], [678, 128], [682, 114], [686, 133], [691, 105], [697, 113], [701, 99], [704, 128],
];

// lower side of the second channel where the two part ways
const DIPS: Pt[] = [
  [420, 138], [427, 122], [432, 136], [460, 154], [448, 125], [484, 126], [508, 140], [523, 131], [531, 128], [544, 133],
  [555, 130], [586, 128], [617, 135], [637, 145], [641, 136], [659, 140], [671, 152], [678, 151], [684, 147],
];

// [x, top, bottom] of the dense tail
const TAIL = [
  [704, 118, 132], [730, 120, 135], [770, 121, 136], [820, 121, 137], [850, 128, 141], [880, 135, 143], [920, 139, 146],
  [960, 142, 149], [985, 145, 147], [1109, 146, 147],
];

const SPIKES = [712, 719, 725, 731, 739, 746, 752, 762, 769, 776, 784, 793, 800, 809, 816, 824, 831, 839, 853];

function noise(i: number) {
  const v = Math.sin(i * 127.1 + 11.7) * 43758.5453;
  return v - Math.floor(v);
}

function tail(x: number) {
  let i = 0;
  while (i < TAIL.length - 2 && x > TAIL[i + 1][0]) i++;
  const [x0, a0, b0] = TAIL[i];
  const [x1, a1, b1] = TAIL[i + 1];
  const k = (x - x0) / (x1 - x0);
  return [a0 + (a1 - a0) * k, b0 + (b1 - b0) * k];
}

function buildTraces() {
  const out1: Pt[] = [...TRACE];
  const out0: Pt[] = TRACE.map(([x, y]): Pt => [x, y]);
  DIPS.forEach(([x, y]) => out0.push([x, y]));
  out0.sort((a, b) => a[0] - b[0]);
  for (let x = 705, i = 0; x <= 1109; x += x < 780 ? 1.1 : 0.8, i++) {
    const [top, bottom] = tail(x);
    const spike = SPIKES.some((s) => Math.abs(s - x) < 0.6) ? 9 + noise(i + 50) * 4 : 0;
    out1.push([x, spike ? top - spike + 3 : top + (bottom - top) * noise(i)]);
    const flat = x > 865 && noise(i + 300) > 0.1;
    out0.push([x, flat || x > 960 ? 146.6 : Math.min(152, top + (bottom - top) * 0.6 + noise(i + 900) ** 2 * 16)]);
  }
  return [out0, out1].map((pts) => pts.map(([x, y]) => `${(x + PLOT.x).toFixed(1)},${(y + PLOT.y).toFixed(1)}`).join(" "));
}

const [TRACE_0, TRACE_1] = buildTraces();

const FREQS = [20, 30, 40, 50, 60, 70, 80, 90, 100, 200, 300, 400, 500, 600, 700, 800, 900, 1000, 2000, 3000, 4000, 5000, 6000, 7000, 8000, 9000, 10000, 20000];
const UNLABELLED = [3, 5, 7, 9];

function freqX(f: number) {
  return Math.round(PLOT.x + 360.5 * Math.log10(f / 20)) + 0.5;
}

function Spectrum() {
  return (
    <svg className="block w-full" viewBox="0 0 1149 210" fontFamily="Liberation Sans, Arial, sans-serif" fill="#fff">
      <rect x={PLOT.x} y={PLOT.y} width={PLOT.w} height={PLOT.h} fill="#000" />
      {Array.from({ length: 14 }, (_, i) => {
        const y = Math.round(23 + i * 10.27) + 0.5;
        return (
          <g key={i}>
            <path d={`M${PLOT.x} ${y} H${PLOT.x + PLOT.w}`} stroke="#5f6d7a" strokeDasharray="3 2" />
            <path d={`M${PLOT.x - 4} ${y} H${PLOT.x}`} stroke="#111" />
            <text x={PLOT.x - 4} y={y + 3.5} fontSize="11" textAnchor="end">{i === 0 ? "0" : `-${i * 10}`}</text>
          </g>
        );
      })}
      {FREQS.map((f) => {
        const x = freqX(f);
        const decade = Number.isInteger(Math.log10(f));
        const lead = Number(String(f)[0]);
        return (
          <g key={f}>
            <path d={`M${x} ${PLOT.y} V${PLOT.y + PLOT.h}`} stroke={decade ? "#7f8d9a" : "#465059"} strokeDasharray="3 2" />
            <path d={`M${x} ${PLOT.y + PLOT.h} v4`} stroke="#111" />
            {!UNLABELLED.includes(lead) && (
              <text x={x} y={decade ? 184 : 182} fontSize={decade ? 12 : 9} textAnchor="middle">{f}</text>
            )}
          </g>
        );
      })}
      <polyline points={TRACE_0} fill="none" stroke="#c9c9fb" strokeWidth="1.1" />
      <polyline points={TRACE_1} fill="none" stroke="#cd6446" strokeWidth="1.3" />
      <text x="594" y="197" fontSize="11" textAnchor="middle">Frequency</text>
      <text x="13" y="90" fontSize="11" textAnchor="middle" transform="rotate(-90 13 90)">Amplitude (dB)</text>
    </svg>
  );
}

const SERIES = [
  { name: "ASD - Spkr Out 0", className: "bg-[#ccccff] text-[#222]" },
  { name: "ASD - Spkr Out 1", className: "bg-[#c96244] text-white" },
];

function Legend() {
  return (
    <div className="absolute right-[1px] top-[10px] flex h-[96px] w-[197px] flex-col rounded-[3px] border-2 border-[#5f5f5f] bg-[#3a3a3a]">
      <div className="flex h-[16px] shrink-0 items-center justify-between bg-linear-to-b from-[#707070] to-[#5a5a5a] px-[5px]">
        <Svg size={10} w={14} className="text-[#2e2e2e]">
          <path d="M0 5 L6 0 V3 H14 V7 H6 V10 Z" fill="currentColor" stroke="none" />
        </Svg>
        <span className="flex h-[9px] w-[12px] items-center justify-center border-2 border-[#2e2e2e]">
          <span className="h-[2px] w-[5px] bg-[#2e2e2e]" />
        </span>
      </div>
      <div className="flex h-[24px] items-center justify-between px-[4px] text-[10px]">
        {["Linear", "Log", "Engine Orders"].map((o) => (
          <label key={o} className="flex items-center gap-[6px]">
            <input
              type="radio"
              name="scale"
              defaultChecked={o === "Log"}
              className="h-[11px] w-[11px] appearance-none rounded-full border-[3px] border-[#757575] bg-[#757575] checked:bg-[#e8e8e8]"
            />
            {o}
          </label>
        ))}
      </div>
      <div className="flex flex-1 items-end justify-end pr-[6px]">
        <ClearAll />
      </div>
      <ul className="mx-[3px] mb-[3px] rounded-[2px] border-2 border-[#161616]">
        {SERIES.map((s) => (
          <li key={s.name} className="flex h-[16px] items-center gap-[2px] pr-[2px]">
            <span className={clsx("mr-[2px] h-full flex-1 whitespace-nowrap pl-[2px] text-[10px] leading-[16px]", s.className)}>{s.name}</span>
            <button aria-label={`Pause ${s.name}`} className="flex h-[14px] w-[15px] items-center justify-center gap-[3px] rounded-[2px] bg-[#757575]">
              <span className="h-[9px] w-[3px] bg-black" />
              <span className="h-[9px] w-[3px] bg-black" />
            </button>
            <button aria-label={`Pin ${s.name}`} className="flex h-[14px] w-[15px] items-center justify-center rounded-[2px] bg-[#757575] text-black">
              <Svg size={10} w={12}>
                <path d="M0 5 H5" strokeWidth="1.500" />
                <path d="M4 1 L6 3 H9 L11.500 1 V9 L9 7 H6 L4 9 Z" fill="currentColor" stroke="none" />
              </Svg>
            </button>
            <button aria-label={`Remove ${s.name}`}><TrashIcon size={14} /></button>
          </li>
        ))}
      </ul>
    </div>
  );
}

function VerticalSetting({ id, label, value }: { id: string; label: string; value: string }) {
  return (
    <div className="flex w-[18px] flex-col items-center">
      <label htmlFor={id} className="h-[70px] whitespace-nowrap text-[10px] leading-[14px] [writing-mode:vertical-rl]">
        {label}
      </label>
      <select id={id} className="h-[90px] w-[18px] appearance-none border-2 border-[#4a4a4a] bg-transparent pt-[3px] text-[10px] leading-[14px] [writing-mode:vertical-rl]">
        <option>{value}</option>
      </select>
    </div>
  );
}

function SpectrumPanel() {
  return (
    <div className="shrink-0">
      <div className="relative flex h-[17px] items-center justify-center border-y-2 border-[#262626] border-b-[#505050] bg-[#333]">
        <span className="mr-[8px] h-[4px] w-[45px] border-y border-[#707070]" />
        <div className="absolute right-[4px] top-0 flex h-[14px] text-[#777]">
          <button aria-label="Minimize panel" className="flex w-[17px] items-end justify-center border-x border-[#666] pb-[2px]">
            <span className="h-[2px] w-[10px] bg-[#777]" />
          </button>
          <button aria-label="Restore panel" className="flex w-[17px] items-center justify-center border-r border-[#666]">
            <Svg size={10}>
              <path d="M1 1 H9 V9 H1 Z" strokeWidth="1.300" />
              <path d="M1 5 H5 V9 H1 Z" fill="currentColor" stroke="none" />
            </Svg>
          </button>
        </div>
      </div>
      <div className="flex min-h-[210px] bg-[#6a6a6a]">
        <div className="relative min-w-0 flex-1">
          <Spectrum />
          <Legend />
        </div>
        <div className="flex w-[48px] shrink-0 flex-col items-end pr-[4px] pt-[10px]">
          <button aria-label="Spectrum settings" className="mb-[9px]"><GearIcon size={23} /></button>
          <div className="flex gap-[2px]">
            <VerticalSetting id="window-type" label="Window Type:" value="Hamming" />
            <span className="w-px bg-[#8a8a8a]" />
            <VerticalSetting id="fft-size" label="FFT Size (ms):" value="250" />
          </div>
        </div>
      </div>
    </div>
  );
}

/* ---------- vehicle parameters ---------- */

const PARAMS = [
  { name: "Gear", value: "1", path: "M4 31 H146" },
  { name: "Engine RPM", value: "837", path: "M4 39 L90 37 L146 36" },
  { name: "Vehicle Speed", value: "111", path: "M4 38 L30 36 L70 33 L110 30 L146 28" },
  { name: "Throttle Pedal", value: "43", path: "M4 24 H146" },
];

function VehiclePanel() {
  return (
    <section className="flex w-[195px] shrink-0 flex-col bg-[#6a6a6a]">
      <h2 className="pt-[4px] text-center text-[12px] font-bold leading-[20px] underline">Vehicle Input Parameters</h2>
      <h3 className="mb-[4px] mt-[7px] pl-[9px] text-[10px] leading-[14px]">Basic Parameters</h3>
      <div className="flex flex-col gap-[2px] px-[6px]">
        {PARAMS.map((p) => (
          <div key={p.name} className="border border-[#111] p-px">
            <button className="flex h-[15px] w-full items-center justify-between bg-linear-to-b from-[#858585] to-[#666] pl-[3px] pr-[4px] text-[10px]">
              {p.name}
              <span className="text-[#cfcfcf]"><Caret /></span>
            </button>
            <svg className="mb-px block h-[44px] w-full border border-[#444] bg-black" viewBox="0 0 150 44" preserveAspectRatio="none" aria-hidden="true">
              <path d={p.path} fill="none" stroke="#0ba8e8" strokeWidth="1.800" />
            </svg>
            <input aria-label={p.name} readOnly value={p.value} className="block h-[17px] w-full rounded-[2px] border-2 border-[#383838] bg-[#6a6a6a] text-center text-[10px]" />
          </div>
        ))}
      </div>
      <span className="flex-1" />
      <button className="mx-[2px] h-[16px] border-t border-[#444] text-[10px] text-[#cfcfcf]">Close This Panel</button>
    </section>
  );
}

/* ---------- level meters ---------- */

const METERS = [
  { name: "MicIn", db: "-80", level: 0, peak: null },
  { name: "SpkrOut0", db: "-31", level: 48.1, peak: 51.6 },
  { name: "SpkrOut1", db: "-31", level: 48.5, peak: 51.4 },
  { name: "VinIn", db: "- -", level: 0, peak: null },
];

function MeterPanel() {
  return (
    <section className="flex w-[92px] shrink-0 flex-col bg-[#6a6a6a]">
      <h2 className="pl-[18px] pt-[5px] text-center text-[10px] leading-[14px]">ASD</h2>
      <div className="flex flex-1 pt-px">
        <ul className="mt-[1px] flex w-[25px] flex-col justify-between text-[8px] leading-[14px]">
          {Array.from({ length: 61 }, (_, i) =>
            i % 3 === 0 ? (
              <li key={i} className="flex h-0 items-center justify-end gap-px first:mt-[7px]">
                {i === 0 ? "0" : -i}
                <span className="h-px w-[4px] bg-[#c8c8c8]" />
              </li>
            ) : (
              <li key={i} className="flex h-0 items-center justify-end">
                <span className="h-px w-[2px] bg-[#c8c8c8]" />
              </li>
            )
          )}
        </ul>
        <div className="flex flex-1 gap-[3px] pr-[6px]">
          {METERS.map((m) => (
            <div key={m.name} className="relative flex-1 bg-black outline outline-[#484848]">
              <span className="absolute inset-x-0 top-[7px] h-[2px] bg-[#555]" />
              {m.peak !== null && <span className="absolute inset-x-0 h-[2px] bg-[#e0d800]" style={{ bottom: m.peak - 0.6 + "%" }} />}
              <span className="absolute inset-x-0 bottom-0 bg-linear-to-b from-[#3aca48] to-[#38904a]" style={{ height: m.level - 0.7 > 0 ? m.level - 0.7 + "%" : 0 }} />
            </div>
          ))}
        </div>
      </div>
      <div className="flex h-[67px] shrink-0 gap-[3px] pl-[25px] pr-[6px] pt-[4px] text-center text-[8px] leading-[9px]">
        {METERS.map((m) => (
          <div key={m.name} className="relative flex-1 whitespace-nowrap">
            <div className="-mx-[2px]">{m.db}</div>
            <div>dB</div>
            <div className="absolute right-0 top-[19px] origin-top-right -rotate-45 text-[10px]">{m.name}</div>
          </div>
        ))}
      </div>
      <button className="ml-[2px] h-[16px] border-t border-[#444] text-[10px] text-[#cfcfcf]">Close This Panel</button>
    </section>
  );
}

function Splitter({ grip, narrow }: { grip?: boolean; narrow?: boolean }) {
  return (
    <div className={clsx("flex shrink-0 items-center justify-center border-r border-[#5c5c5c] bg-[#363636]", narrow ? "w-[5px]" : "w-[7px]")}>
      {grip && <span className="h-[44px] w-[3px] border-x border-[#777]" />}
    </div>
  );
}

const BAR_BUTTON = "h-[22px] shrink-0 whitespace-nowrap rounded-[3px] border border-[#4a4a4a] bg-linear-to-b from-[#878787] to-[#5e5e5e] text-[10px]";

export default function App() {
  return (
    <div className="relative flex min-h-screen bg-linear-to-r from-[#09264c] via-[#0a1632] to-[#080d1c] pb-[166px] pl-[115px] pr-[116px] pt-[165px] font-['Open_Sans','Noto_Sans',sans-serif] text-white">
      <div className="pointer-events-none absolute inset-0 bg-linear-to-b from-black/30 via-transparent to-black/20" />
      <LeftDots />
      <RightDots />
      <main className="relative flex min-w-0 flex-1 flex-col bg-[#444]">
        <header className="flex h-[20px] shrink-0 items-center bg-white text-[#999]">
          <svg width="12" height="12" viewBox="0 0 12 12" className="ml-[2px]" aria-hidden="true">
            <circle cx="6" cy="6" r="6" fill="#2c3038" />
            <circle cx="6" cy="6" r="4" fill="#7d8694" />
            <circle cx="6" cy="6" r="2.400" fill="#39404e" />
          </svg>
          <h1 className="flex-1 pl-[5px] text-[10px]">LiveAMP</h1>
          <div className="flex gap-[30px] pr-[17px]">
            <button aria-label="Minimize"><Svg size={10}><path d="M0 4.500 H9" strokeWidth="1" /></Svg></button>
            <button aria-label="Restore"><Svg size={10}><path d="M0.500 2.500 H7.500 V9.500 H0.500 Z M2.500 2.500 V0.500 H9.500 V7.500 H7.500" strokeWidth="1" /></Svg></button>
            <button aria-label="Close window"><Svg size={10}><path d="M0.500 0.500 L9.500 9.500 M9.500 0.500 L0.500 9.500" strokeWidth="1" /></Svg></button>
          </div>
        </header>
        <TopToolbar />
        <SecondToolbar />
        <div className="flex min-h-0 flex-1">
          <LeftPanel />
          <Splitter grip />
          <div className="flex min-w-0 flex-1 flex-col">
            <MainArea />
            <SpectrumPanel />
          </div>
          <Splitter />
          <VehiclePanel />
          <Splitter narrow />
          <MeterPanel />
        </div>
        <footer className="flex h-[28px] shrink-0 items-center gap-[6px] border-b-2 border-t border-[#3a3a3a] bg-[#6a6a6a] px-[5px]">
          <button className={clsx(BAR_BUTTON, "w-[70px]")}>Disconnect</button>
          <button className={clsx(BAR_BUTTON, "w-[71px]")}>Restart ASD</button>
          <input aria-label="Status" readOnly className="h-[18px] min-w-0 flex-1 rounded-[2px] border-2 border-[#161616] bg-[#3a3a3a] px-1 text-[10px]" />
          <button className={clsx(BAR_BUTTON, "w-[53px]")}>Log</button>
        </footer>
      </main>
    </div>
  );
}
